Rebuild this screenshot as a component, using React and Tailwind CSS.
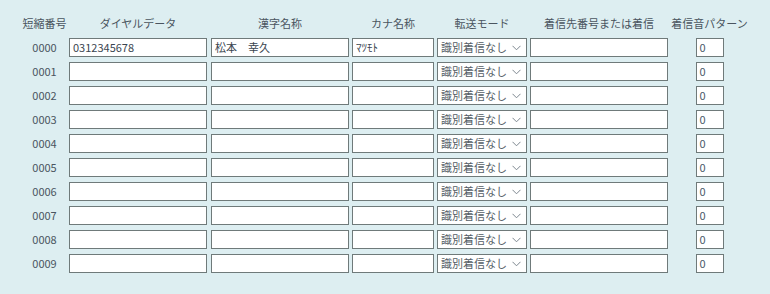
import React from "react";

const rows = [
  { no: "0000", dial: "0312345678", kanji: "松本　幸久", kana: "ﾏﾂﾓﾄ" },
  ...["0001","0002","0003","0004","0005","0006","0007","0008","0009"].map((no) => ({ no, dial: "", kanji: "", kana: "" })),
];

const font = { fontFamily: '"Noto Sans CJK JP", "Noto Sans", sans-serif' };

function Box({ w, children, extra = "" }) {
  return (
    <div className={`${w} ${extra} h-[19px] bg-white border border-[#6f7a7a] flex items-center px-[3px] text-[11px] leading-none text-[#3a4550] whitespace-nowrap overflow-hidden`}>
      {children}
    </div>
  );
}

function Chevron() {
  return (
    <svg width="9" height="6" viewBox="0 0 9 6" className="ml-auto mr-[2px]">
      <path d="M0.5 0.8 L4.5 4.8 L8.5 0.8" fill="none" stroke="#7d8790" strokeWidth="1" />
    </svg>
  );
}

export default function App() {
  return (
    <div className="w-full h-[294px] bg-[#ddeef1] pl-[20px] pt-[14px]" style={font}>
      <div className="flex flex-col gap-[5px]">
        <div className="flex h-[19px] items-center text-[11px] text-[#4a5560] whitespace-nowrap">
          <div className="w-[49px] text-center">短縮番号</div>
          <div className="w-[138px] text-center">ダイヤルデータ</div>
          <div className="w-[138px] ml-[4px] text-center">漢字名称</div>
          <div className="w-[82px] ml-[3px] text-center">カナ名称</div>
          <div className="w-[90px] ml-[3px] text-center">転送モード</div>
          <div className="w-[138px] ml-[3px] text-center">着信先番号または着信</div>
          <div className="w-[83px] flex justify-center">着信音パターン</div>
        </div>
        {rows.map((r) => (
          <div key={r.no} className="flex h-[19px] items-center">
            <div className="w-[49px] text-center text-[11px] text-[#4a5560]">{r.no}</div>
            <Box w="w-[138px]">{r.dial}</Box>
            <Box w="w-[138px]" extra="ml-[4px]">{r.kanji}</Box>
            <Box w="w-[82px]" extra="ml-[3px]">{r.kana}</Box>
            <Box w="w-[90px]" extra="ml-[3px] text-[#555e66]">
              <span>識別着信なし</span>
              <Chevron />
            </Box>
            <Box w="w-[138px]" extra="ml-[3px]" />
            <div className="w-[83px] flex justify-center">
              <Box w="w-[28px]" extra="text-[#4a5a6a]">0</Box>
            </div>
          </div>
        ))}
      </div>
    </div>
  );
}
